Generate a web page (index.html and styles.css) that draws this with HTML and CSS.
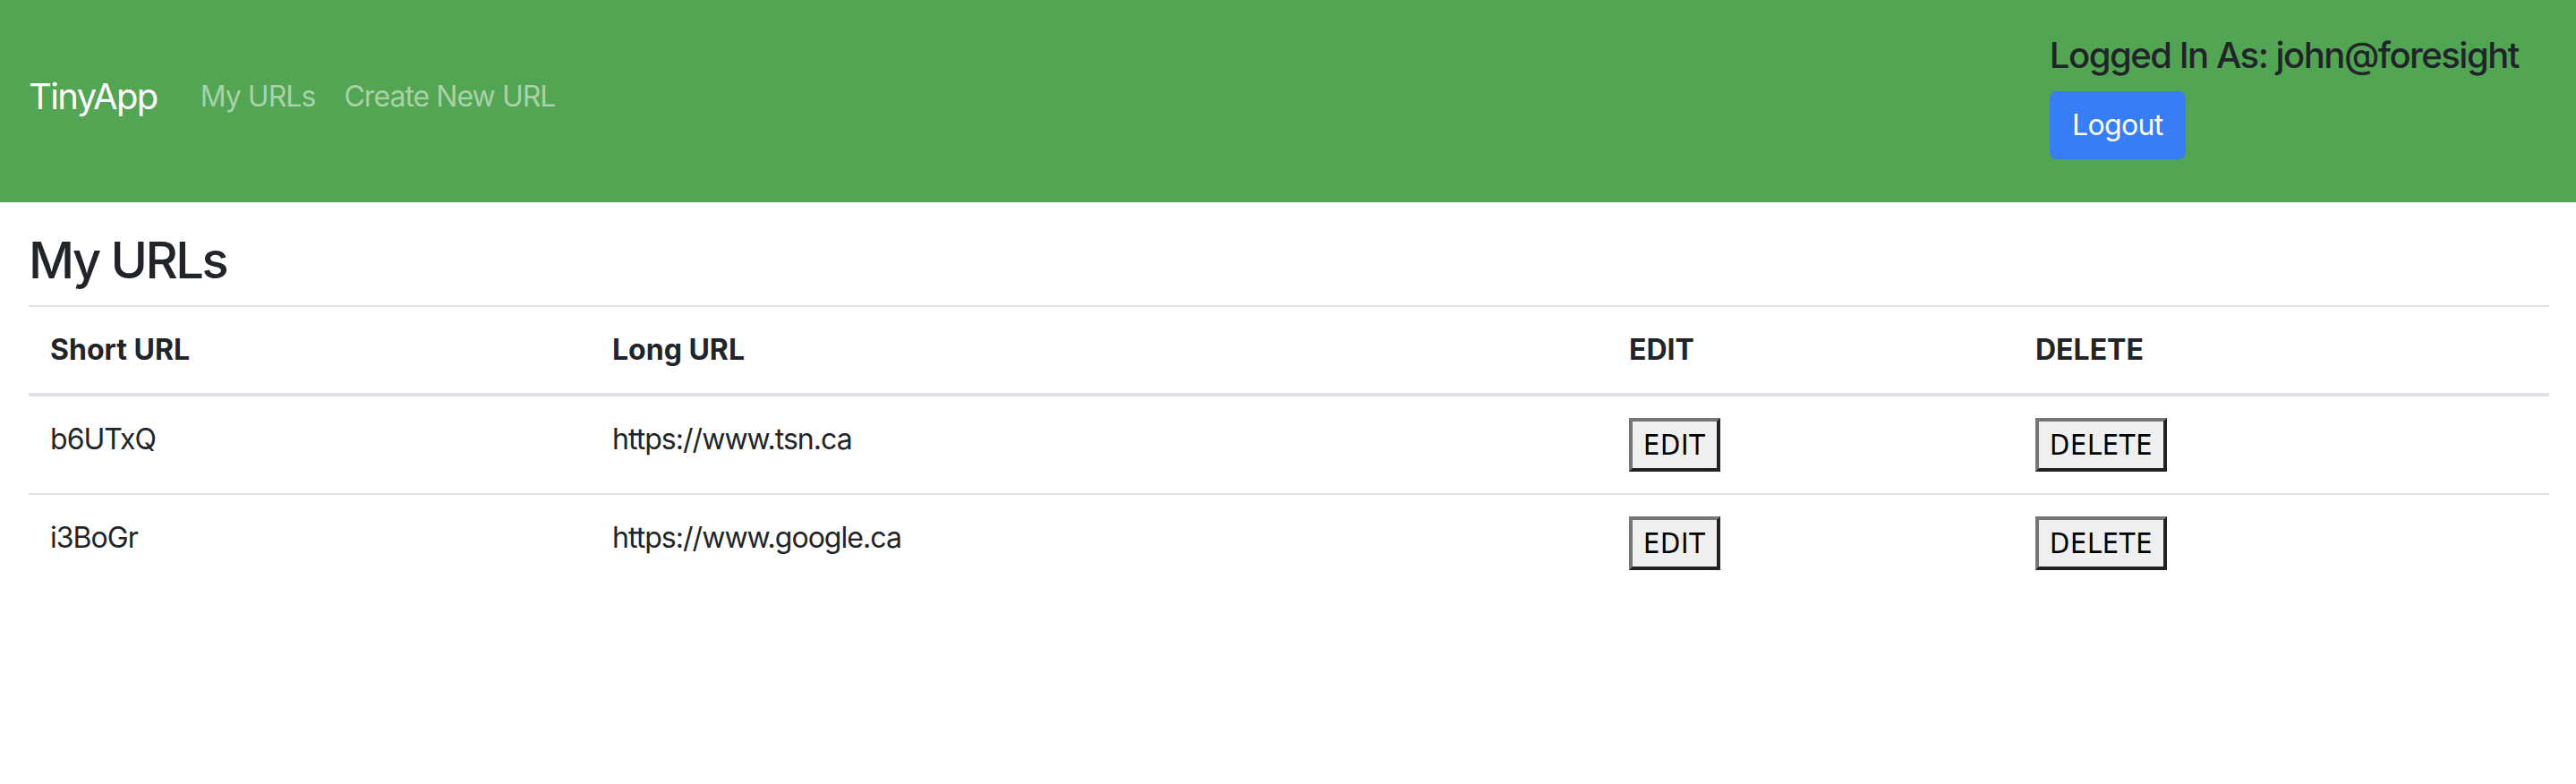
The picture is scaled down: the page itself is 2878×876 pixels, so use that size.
FILE: index.html
```html
<!DOCTYPE html>
<html lang="en">
<head>
<meta charset="utf-8">
<title>TinyApp</title>
<link rel="stylesheet" href="styles.css">
</head>
<body>
<nav class="navbar">
  <div class="nav-left">
    <a class="brand" href="#">TinyApp</a>
    <a class="nav-link" href="#">My URLs</a>
    <a class="nav-link" href="#">Create New URL</a>
  </div>
  <div class="nav-right">
    <h5 class="user">Logged In As: john@foresight</h5>
    <form class="logout-form">
      <button type="button" class="btn-primary">Logout</button>
    </form>
  </div>
</nav>
<main class="main">
  <h3 class="title">My URLs</h3>
  <table class="table">
    <colgroup>
      <col class="c-short">
      <col class="c-long">
      <col class="c-edit">
      <col class="c-delete">
    </colgroup>
    <thead>
      <tr>
        <th>Short URL</th>
        <th>Long URL</th>
        <th>EDIT</th>
        <th>DELETE</th>
      </tr>
    </thead>
    <tbody>
      <tr>
        <td>b6UTxQ</td>
        <td>https://www.tsn.ca</td>
        <td><button type="button" class="btn-plain">EDIT</button></td>
        <td><button type="button" class="btn-plain">DELETE</button></td>
      </tr>
      <tr>
        <td>i3BoGr</td>
        <td>https://www.google.ca</td>
        <td><button type="button" class="btn-plain">EDIT</button></td>
        <td><button type="button" class="btn-plain">DELETE</button></td>
      </tr>
    </tbody>
  </table>
</main>
</body>
</html>
```
FILE: styles.css
```css
* { box-sizing: border-box; }

html, body {
  margin: 0;
  padding: 0;
  background: #ffffff;
}

body {
  font-family: Inter, "Noto Sans", "Liberation Sans", sans-serif;
  font-size: 32px;
  line-height: 1.5;
  color: #212529;
  letter-spacing: -0.03em;
}

.navbar {
  display: flex;
  justify-content: space-between;
  align-items: center;
  background: #52a552;
  padding: 16px 64px 16px 32px;
  height: 226px;
}

.nav-left {
  display: flex;
  align-items: center;
  margin-bottom: 10px;
}

.brand {
  color: #ffffff;
  font-size: 40px;
  line-height: 60px;
  padding: 10px 0;
  margin-right: 32px;
  text-decoration: none;
  letter-spacing: -0.04em;
}

.nav-link {
  color: rgba(255, 255, 255, 0.5);
  text-decoration: none;
  padding: 16px;
  line-height: 48px;
}

.nav-right {
  display: flex;
  flex-direction: column;
  align-items: flex-start;
  padding-top: 22px;
}

.user {
  margin: 0 0 16px 0;
  font-size: 40px;
  font-weight: 500;
  line-height: 48px;
  color: #212529;
  letter-spacing: -0.037em;
}

.logout-form {
  margin: 0 0 32px 0;
}

.btn-primary {
  font-family: inherit;
  font-size: 32px;
  line-height: 48px;
  letter-spacing: -0.02em;
  color: #ffffff;
  background: #367df6;
  border: 2px solid #367df6;
  border-radius: 8px;
  padding: 12px 0;
  width: 152px;
  text-align: center;
}

.main {
  padding: 32px 30px 0 32px;
}

.title {
  margin: 0 0 16px 0;
  font-size: 56px;
  font-weight: 500;
  line-height: 1.2;
  letter-spacing: -0.043em;
}

.table {
  width: 100%;
  border-collapse: collapse;
  table-layout: fixed;
}

.c-short { width: 628px; }
.c-long { width: 1136px; }
.c-edit { width: 454px; }

.table th,
.table td {
  padding: 24px;
  text-align: left;
  vertical-align: top;
  border-top: 2px solid #dee2e6;
}

.table th {
  font-weight: 700;
  letter-spacing: 0;
  border-bottom: 4px solid #dee2e6;
}

.btn-plain {
  font-family: "DejaVu Sans Condensed", "DejaVu Sans", sans-serif;
  font-stretch: condensed;
  font-size: 32px;
  line-height: 48px;
  letter-spacing: 0.8px;
  color: #000000;
  background: #efefef;
  border-width: 4px;
  border-style: solid;
  border-color: #767676 #222222 #222222 #767676;
  padding: 2px 12px;
  margin: 0;
}
```
